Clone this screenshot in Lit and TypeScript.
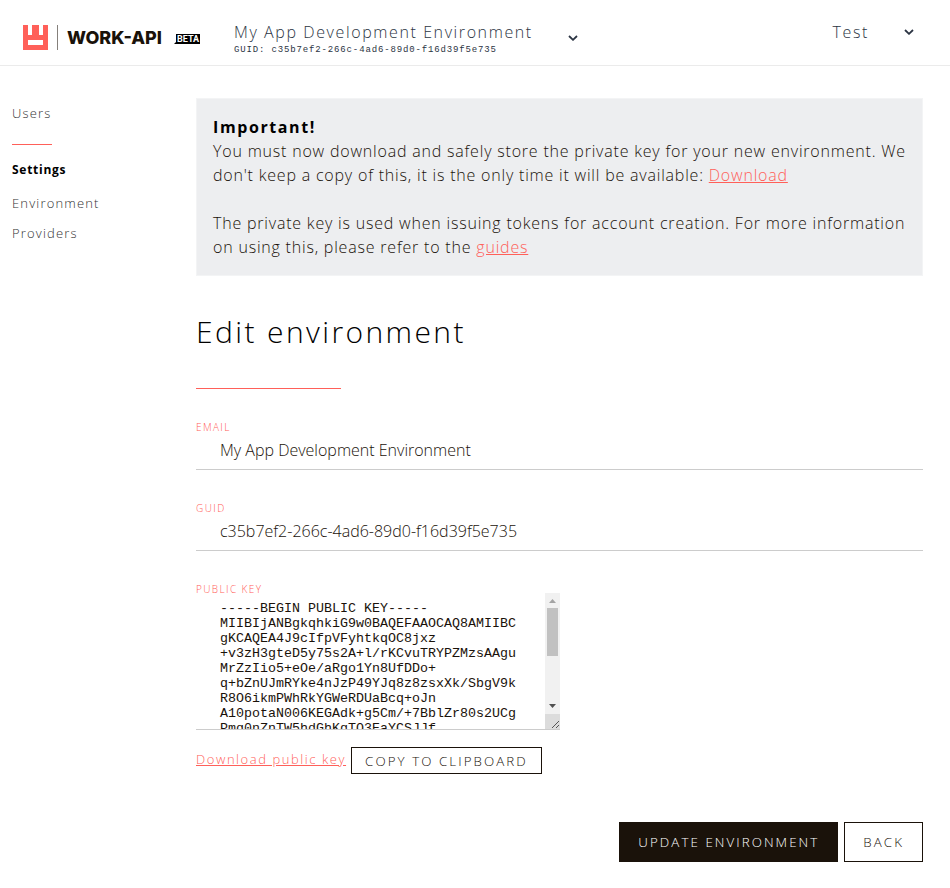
import { LitElement, html, css, svg } from "lit";
import { customElement, property, state } from "lit/decorators.js";

const GUID = "c35b7ef2-266c-4ad6-89d0-f16d39f5e735";

const PUBLIC_KEY = [
  "-----BEGIN PUBLIC KEY-----",
  "MIIBIjANBgkqhkiG9w0BAQEFAAOCAQ8AMIIBCgKCAQEA4J9cIfpVFyhtkqOC8jxz",
  "+v3zH3gteD5y75s2A+l/rKCvuTRYPZMzsAAguMrZzIio5+eOe/aRgo1Yn8UfDDo+",
  "q+bZnUJmRYke4nJzP49YJq8z8zsxXk/SbgV9kR8O6ikmPWhRkYGWeRDUaBcq+oJn",
  "A10potaN006KEGAdk+g5Cm/+7BblZr80s2UCgPmq0nZnTW5hdGhKgTO3EaYCSJJf",
  "x2LwTq7cVb9uYd4kZr1sNf8hGm3eQp6oUj5iKa0tXy2vBw7nRc9lDz4gMh1qEs8f",
  "Wk3pAo6uLj5yIb0rTx2cVn7mQd9eFz4hGs1iKw8vRa3oUp6lYj5tXb0nCq2kMf7g",
  "Ze9dHr4sLw1jTu8yBa3xVo6pIn5qKc0mQIDAQAB",
  "-----END PUBLIC KEY-----",
].join("\n");

const chevron = svg`<svg width="10" height="6" viewBox="0 0 10 6" fill="none" aria-hidden="true">
  <path d="M1 1 L5 4.8 L9 1" stroke="#2b3443" stroke-width="1.8"/>
</svg>`;

@customElement("brand-logo")
export class BrandLogo extends LitElement {
  static styles = css`
    :host { display: block; }
    .logo { display: flex; align-items: center; color: #1a120a; text-decoration: none; }
    .bar { width: 1px; height: 25px; margin: 0 9px; background: #85807b; }
    .word { font: 800 18px/24px Inter, sans-serif; }
    .beta {
      align-self: flex-end;
      margin: 0 0 6px 12px;
      padding: 0 1px 0 3px;
      background: #000;
      clip-path: polygon(2px 0, 100% 0, 100% 100%, 0 100%, 2px 8px);
      color: #fff;
      font: 700 9px/10px Roboto, sans-serif;
    }
  `;

  render() {
    return html`<a class="logo" href="#home">
      <svg width="25" height="25" viewBox="0 0 25 25" aria-hidden="true">
        <path fill="#ff6059" fill-rule="evenodd"
          d="M0 0H5V10H9V0H16V10H20V0H25V25H0Z M5 15V20H20V15Z"/>
      </svg>
      <span class="bar"></span>
      <span class="word">WORK-API</span>
      <span class="beta">BETA</span>
    </a>`;
  }
}

@customElement("side-nav")
export class SideNav extends LitElement {
  static styles = css`
    :host { display: block; font-size: 13px; line-height: 30px; letter-spacing: 0.09em; }
    a { display: block; color: #333; text-decoration: none; }
    .rule { width: 40px; height: 1px; margin: 16px 0 10px; border: 0; background: #ff6059; }
    .title {
      margin: 0 0 3px;
      font-size: 12px;
      font-weight: 700;
      line-height: 30px;
      letter-spacing: 0.06em;
      color: #000;
    }
  `;

  render() {
    return html`<nav aria-label="Main">
      <a href="#users">Users</a>
      <hr class="rule" />
      <h2 class="title">Settings</h2>
      <a href="#environment">Environment</a>
      <a href="#providers">Providers</a>
    </nav>`;
  }
}

@customElement("app-root")
export class AppRoot extends LitElement {
  @property() environment = "My App Development Environment";
  @property() user = "Test";
  @state() private publicKey = PUBLIC_KEY;

  static styles = css`
    :host {
      display: block;
      background: #fff;
      color: #1a120a;
      font-family: "Open Sans", sans-serif;
      font-size: 16px;
      font-weight: 300;
      line-height: 24px;
    }
    * { box-sizing: border-box; }
    a { color: #ff6059; }

    .header {
      display: flex;
      align-items: flex-start;
      height: 66px;
      padding: 0 36px 0 23px;
      border-bottom: 1px solid #ebebeb;
    }
    .brand { margin-top: 25px; width: 211px; flex: none; }
    .menu {
      display: flex;
      align-items: center;
      gap: 35px;
      padding: 0;
      border: 0;
      background: none;
      color: #2b3443;
      font: inherit;
      letter-spacing: 0.1em;
      text-align: left;
    }
    .env { margin-top: 20px; }
    .user { margin: 20px 0 0 auto; }
    .env-name { display: block; }
    .env-guid {
      display: block;
      font: 400 9px/12px "Liberation Mono", monospace;
      letter-spacing: 0.095em;
    }
    .menu svg { display: block; }

    .page {
      display: grid;
      grid-template-columns: 184px 1fr;
      padding: 32px 27px 26px 12px;
    }

    .notice {
      padding: 16px;
      border: 1px solid #f3f4f5;
      background: #edeef0;
      letter-spacing: 0.05em;
    }
    .notice p { margin: 0; }
    .notice p + p { margin-top: 24px; }
    .notice strong { display: block; font-weight: 700; color: #000; letter-spacing: 0.1em; }

    .heading {
      margin: 36px 0 0;
      font-size: 30px;
      font-weight: 300;
      line-height: 40px;
      letter-spacing: 0.08em;
      color: #000;
    }
    .rule { width: 145px; height: 1px; margin: 36px 0 34px; border: 0; background: #ff6059; }

    .field { margin-bottom: 34px; }
    .label {
      display: block;
      font-size: 10px;
      line-height: 8px;
      letter-spacing: 0.14em;
      text-transform: uppercase;
      color: #ff6059;
    }
    .input {
      display: block;
      width: 100%;
      height: 39px;
      padding: 0 24px;
      border: 0;
      border-bottom: 1px solid #ccc;
      outline: 0;
      background: none;
      color: inherit;
      font: inherit;
    }
    .key-field { margin-bottom: 17px; }
    .key-box {
      display: flex;
      width: 364px;
      max-width: 100%;
      height: 137px;
      border-bottom: 1px solid #ccc;
    }
    .key {
      flex: 1;
      min-width: 0;
      padding: 8px 24px;
      border: 0;
      outline: 0;
      background: none;
      color: #1a120a;
      font-family: "Liberation Mono", monospace;
      line-height: 15px;
      word-break: break-all;
      scrollbar-width: none;
      resize: none;
    }
    .scrollbar {
      display: flex;
      flex-direction: column;
      align-items: center;
      width: 15px;
      background: #f1f1f1;
    }
    .scrollbar svg { display: block; flex: none; }
    .thumb { width: 11px; height: 48px; margin-bottom: auto; background: #c1c1c1; }

    .key-actions {
      display: flex;
      align-items: flex-start;
      gap: 5px;
      font-size: 13px;
      letter-spacing: 0.12em;
    }
    .button {
      height: 40px;
      padding: 0 18px;
      border: 1px solid #1a120a;
      background: #fff;
      color: #1a120a;
      font-family: inherit;
      font-weight: inherit;
      letter-spacing: 0.155em;
      text-transform: uppercase;
    }
    .small { height: 27px; padding: 0 13px; }
    .primary { background: #1a120a; color: #fff; }
    .actions { display: flex; justify-content: flex-end; gap: 6px; margin-top: 48px; }
  `;

  private copyKey() {
    navigator.clipboard?.writeText(this.publicKey);
  }

  render() {
    return html`
      <header class="header">
        <brand-logo class="brand"></brand-logo>
        <button class="menu env" type="button" aria-haspopup="menu">
          <span>
            <span class="env-name">${this.environment}</span>
            <span class="env-guid">GUID: ${GUID}</span>
          </span>
          ${chevron}
        </button>
        <button class="menu user" type="button" aria-haspopup="menu">
          <span>${this.user}</span>
          ${chevron}
        </button>
      </header>

      <div class="page">
        <side-nav></side-nav>
        <main>
          <section class="notice">
            <p>
              <strong>Important!</strong>
              You must now download and safely store the private key for your new environment.
              We don't keep a copy of this, it is the only time it will be available:
              <a href="#private-key">Download</a>
            </p>
            <p>
              The private key is used when issuing tokens for account creation. For more
              information on using this, please refer to the <a href="#guides">guides</a>
            </p>
          </section>

          <h1 class="heading">Edit environment</h1>
          <hr class="rule" />

          <form @submit=${(e: Event) => e.preventDefault()}>
            <div class="field">
              <label class="label" for="email">Email</label>
              <input class="input" id="email" type="text" .value=${this.environment} />
            </div>
            <div class="field">
              <label class="label" for="guid">GUID</label>
              <input class="input" id="guid" type="text" readonly .value=${GUID} />
            </div>
            <div class="field key-field">
              <label class="label" for="key">Public key</label>
              <div class="key-box">
                <textarea class="key" id="key" readonly spellcheck="false" .value=${this.publicKey}></textarea>
                <div class="scrollbar" aria-hidden="true">
                  <svg width="15" height="15"><path d="M4 10L7.5 6L11 10Z" fill="#a3a3a3"/></svg>
                  <div class="thumb"></div>
                  <svg width="15" height="15"><path d="M4 5L7.5 9L11 5Z" fill="#505050"/></svg>
                  <svg width="15" height="15">
                    <path d="M0 0H15V15H0Z" fill="#dcdcdc"/>
                    <path d="M7 14L14 7M11 14L14 11" stroke="#555"/>
                  </svg>
                </div>
              </div>
            </div>
            <div class="key-actions">
              <a href="#public-key">Download public key</a>
              <button class="button small" type="button" @click=${this.copyKey}>Copy to clipboard</button>
            </div>
            <div class="actions">
              <button class="button primary" type="submit">Update environment</button>
              <button class="button" type="button">Back</button>
            </div>
          </form>
        </main>
      </div>
    `;
  }
}
